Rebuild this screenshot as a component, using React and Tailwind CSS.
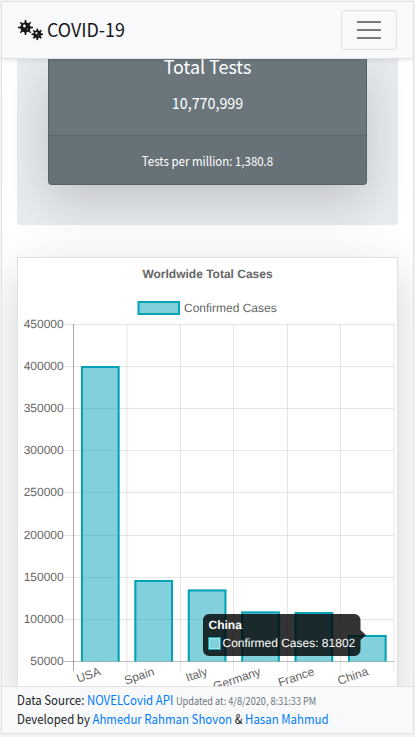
import React from "react";

const TICKS = [450000, 400000, 350000, 300000, 250000, 200000, 150000, 100000, 50000];
const LEFT = 73.5;
const STEP = 53.4;
const BASE = 661.5;
const GRID_X = [126.9, 180.5, 233.5, 287.5, 340.5, 394];
const GRID_Y = [324.5, 366.5, 408.5, 450.5, 492.5, 535.5, 577.5, 619.5];

const COUNTRIES = [
  { name: "USA", top: 366, x: 101.5 },
  { name: "Spain", top: 580, x: 155 },
  { name: "Italy", top: 589.5, x: 208.3 },
  { name: "Germany", top: 611.5, x: 261.5 },
  { name: "France", top: 612, x: 315 },
  { name: "China", top: 635, x: 369 },
];

function Virus({ x, y, r }) {
  const spikes = [0, 45, 90, 135, 180, 225, 270, 315];
  return (
    <g transform={`translate(${x} ${y})`}>
      <circle r={r * 0.68} fill="#171717" />
      {spikes.map((a) => (
        <g key={a} transform={`rotate(${a})`}>
          <path d={`M-1.2 ${-r * 0.6} L-.5 ${-r} H.5 L1.2 ${-r * 0.6}Z`} fill="#171717" />
          <path d={`M-.8 ${-r + 0.3} H.8`} stroke="#171717" strokeWidth=".7" />
        </g>
      ))}
      <circle cx={-r * 0.15} cy={-r * 0.2} r={r * 0.19} fill="#f8f9fa" />
      <circle cx={r * 0.22} cy={r * 0.2} r={r * 0.08} fill="#f8f9fa" />
    </g>
  );
}

function Chart() {
  return (
    <svg
      className="block h-[447px] w-[379px] shrink-0 font-['Liberation_Sans',Arial,sans-serif]"
      viewBox="18 258 379 447"
      fontSize="12"
      fill="#666"
      textRendering="geometricPrecision"
    >
      <text x="207.5" y="278.2" textAnchor="middle" fontWeight="bold">Worldwide Total Cases</text>
      <rect x="138.500" y="302" width="40.500" height="12" fill="#80cfdb" stroke="#04a3b7" strokeWidth="2" />
      <text x="184" y="311.500">Confirmed Cases</text>
      <g stroke="rgba(0,0,0,.1)">
        {GRID_Y.map((y) => <path key={y} d={`M64 ${y}H394`} />)}
        {GRID_X.map((x) => <path key={x} d={`M${x} 324V671`} />)}
      </g>
      <path d={`M${LEFT} 324V671`} stroke="rgba(0,0,0,.34)" />
      <path d={`M64 ${BASE}H394`} stroke="rgba(0,0,0,.25)" />
      {TICKS.map((t, i) => (
        <text key={t} x="63.7" y={328 + i * 42.12} textAnchor="end">{t}</text>
      ))}
      {COUNTRIES.map((c, i) => {
        const x = LEFT + STEP * i + 8.5;
        return (
          <g key={c.name}>
            <rect x={x - 1} y={c.top} width="38.5" height={BASE - c.top} fill="rgba(4,162,183,.5)" />
            <path
              d={`M${x} ${BASE}V${c.top + 1}H${x + 36.6}V${BASE}`}
              fill="none"
              stroke="#04a3b7"
              strokeWidth="2"
            />
            <text transform={`translate(${c.x} 674.7) rotate(-19)`} textAnchor="end">{c.name}</text>
          </g>
        );
      })}
      <path
        d="M209 614H354.500a6 6 0 0 1 6 6V630L366 635L360.500 640V650a6 6 0 0 1-6 6H209a6 6 0 0 1-6-6V620a6 6 0 0 1 6-6Z"
        fill="rgba(0,0,0,.8)"
      />
      <text x="208.500" y="629" fill="#fff" fontWeight="bold">China</text>
      <rect x="208.500" y="637.500" width="12" height="12" fill="#80cfdb" stroke="#04a3b7" />
      <rect x="209.500" y="638.500" width="10" height="10" fill="#80cfdb" stroke="#b5e2e9" />
      <text x="222.500" y="647.300" fill="#fff">Confirmed Cases: 81802</text>
    </svg>
  );
}

export default function App() {
  return (
    <div className="h-[737px] w-[415px] overflow-hidden bg-[#f2f3f3] px-px pt-px pb-[3px] font-['Noto_Sans_CJK_JP','Noto_Sans_CJK_SC',sans-serif] text-[#212529]">
      <div className="flex h-[733px] flex-col overflow-hidden border border-[#dee2e6] bg-white">
        <header className="relative z-10 flex h-[57px] shrink-0 items-center justify-between border-b border-[#dee2e6] bg-[#f8f9fa] pr-4 pl-[15px] shadow-[0_2px_4px_rgba(0,0,0,.075)]">
          <div className="flex items-center">
            <svg className="mr-1 h-6 w-[26px]" viewBox="17 18 26 24">
              <Virus x={25.5} y={27.5} r={7.4} />
              <Virus x={37.3} y={34.3} r={5.6} />
            </svg>
            <span className="mb-[2px] scale-y-[1.05] text-[17.9px] leading-[30px] text-[#171717]">COVID-19</span>
          </div>
          <button className="flex h-10 w-14 flex-col items-center justify-center gap-[6px] rounded border border-[#dee0e2]">
            <span className="h-[2px] w-6 bg-[#7c7d7d]" />
            <span className="h-[2px] w-6 bg-[#7c7d7d]" />
            <span className="h-[2px] w-6 bg-[#7c7d7d]" />
          </button>
        </header>

        <main className="flex min-h-0 flex-1 flex-col overflow-hidden px-[15px]">
          <section className="h-[166px] shrink-0 rounded-b bg-[#e9ecef] px-[31px]">
            <div className="flex h-[126px] flex-col rounded-b border border-t-0 border-[#576268] bg-[#6b767c] text-center text-white shadow-[0_16px_48px_rgba(0,0,0,.175)]">
              <div className="flex h-[77px] shrink-0 flex-col border-b border-[#5b666b]">
                <h5 className="-mt-[5px] scale-y-[1.03] text-[17.9px] leading-6">Total Tests</h5>
                <p className="mt-[13px] scale-y-[1.08] text-[14.3px] leading-6">10,770,999</p>
              </div>
              <div className="flex flex-1 items-center justify-center bg-black/[.03] text-[11.46px] leading-5">
                <p className="scale-y-[1.11]">Tests per million: 1,380.8</p>
              </div>
            </div>
          </section>
          <section className="mt-8 shrink-0 border border-[#dee2e6] bg-white shadow-[0_16px_48px_rgba(0,0,0,.175)]">
            <Chart />
          </section>
        </main>

        <footer className="relative z-10 h-[47px] shrink-0 border-t border-[#dee2e6] bg-[#f8f9fa] px-[15px] pt-[3px] text-[11.46px] leading-[19px] whitespace-nowrap">
          <div className="h-[19px] scale-y-[1.12]">
            Data Source: <a className="text-[#007bff]">NOVELCovid API</a>{" "}
            <small className="text-[9.17px] text-[#6c757d]">Updated at: 4/8/2020, 8:31:33 PM</small>
          </div>
          <div className="scale-y-[1.12]">
            Developed by <a className="text-[#007bff]">Ahmedur Rahman Shovon</a> &amp;{" "}
            <a className="text-[#007bff]">Hasan Mahmud</a>
          </div>
        </footer>
      </div>
    </div>
  );
}
